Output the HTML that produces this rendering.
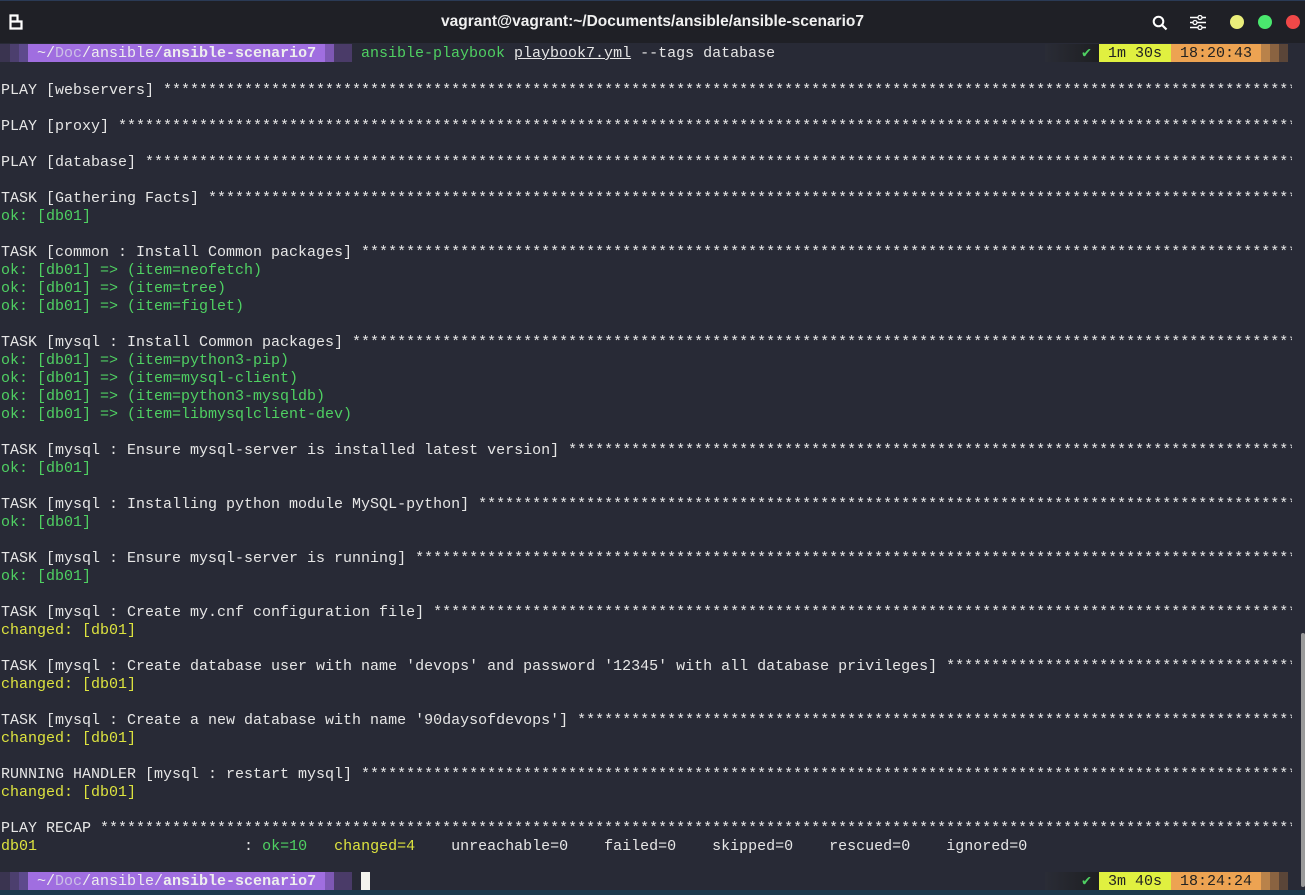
<!DOCTYPE html>
<html><head><meta charset="utf-8"><style>
body{margin:0;width:1305px;height:895px;background:#282a36;overflow:hidden;position:relative;font-family:"Liberation Mono",monospace;font-size:15px;color:#e6e6e6}
#tb{position:absolute;left:0;top:0;width:1305px;height:42px;background:#1f2026;border-top:1px solid #2a3a55}
#title{position:absolute;top:12px;left:0;width:1305px;text-align:center;font-family:"Liberation Sans",sans-serif;font-weight:bold;font-size:15.5px;color:#f0f0f0}
.r{position:absolute;left:1px;height:18px;line-height:18px;white-space:pre;width:1291px;overflow:hidden;margin-top:2px}
.g{color:#4fd062}.y{color:#dde33f}
.seg{position:absolute;height:18px;top:44px}
.pt{position:absolute;height:18px;line-height:18px;white-space:pre;margin-top:1px}
.dot{position:absolute;top:14px;width:14px;height:14px;border-radius:50%}
</style></head><body>
<div id="tb">
<svg style="position:absolute;left:9px;top:13px" width="14" height="16" viewBox="0 0 14 16"><path d="M1.5 1.5H8.5V7.5H12.5V14.5H1.5Z M1.5 7.5H8.5" fill="none" stroke="#fff" stroke-width="2.2"/></svg>
<div id="title">vagrant@vagrant:~/Documents/ansible/ansible-scenario7</div>
<svg style="position:absolute;left:1152px;top:14px" width="16" height="16" viewBox="0 0 16 16"><circle cx="6.5" cy="6.5" r="4.8" fill="none" stroke="#fff" stroke-width="2"/><path d="M10 10L14.5 14.5" stroke="#fff" stroke-width="2.2"/></svg>
<svg style="position:absolute;left:1190px;top:14px" width="16" height="15" viewBox="0 0 16 15"><path d="M0 2.5H16M0 7.5H16M0 12.5H16" stroke="#fff" stroke-width="1.5"/><circle cx="10" cy="2.5" r="2" fill="#1f2026" stroke="#fff" stroke-width="1.3"/><circle cx="5" cy="7.5" r="2" fill="#1f2026" stroke="#fff" stroke-width="1.3"/><circle cx="10" cy="12.5" r="2" fill="#1f2026" stroke="#fff" stroke-width="1.3"/></svg>
<div class="dot" style="left:1230px;background:#eaee7a"></div>
<div class="dot" style="left:1258px;background:#4ae86e"></div>
<div class="dot" style="left:1286px;background:#f04848"></div>
</div>

<!-- top prompt -->
<div class="seg" style="left:0;width:10px;background:#3a3450"></div>
<div class="seg" style="left:10px;width:9px;background:#4c3f6e"></div>
<div class="seg" style="left:19px;width:9px;background:#5d4a8c"></div>
<div class="seg" style="left:28px;width:297px;background:#a06ee0"></div>
<div class="seg" style="left:325px;width:9px;background:#7e58b4"></div>
<div class="seg" style="left:334px;width:18px;background:#4a3b68"></div>
<div class="pt" style="left:37px;top:44px;color:#eee">~/<span style="color:#ccc0e6">Doc</span>/ansible/<b>ansible-scenario7</b></div>
<div class="pt" style="left:361px;top:44px"><span class="g">ansible-playbook</span> <u>playbook7.yml</u> --tags database</div>
<div class="seg" style="left:1045px;width:54px;background:linear-gradient(90deg,#2a2c36,#1e1f22)"></div>
<div class="pt g" style="left:1082px;top:44px;font-weight:bold">✔</div>
<div class="seg" style="left:1099px;width:72px;background:#e0f040"></div>
<div class="pt" style="left:1108px;top:44px;color:#222">1m 30s</div>
<div class="seg" style="left:1171px;width:90px;background:#eda352"></div>
<div class="pt" style="left:1180px;top:44px;color:#222">18:20:43</div>
<div class="seg" style="left:1261px;width:9px;background:#b9824a"></div>
<div class="seg" style="left:1270px;width:9px;background:#8a6341"></div>
<div class="seg" style="left:1279px;width:9px;background:#5a4538"></div>

<div class="r" style="top:80px">PLAY [webservers] ****************************************************************************************************************************************</div>
<div class="r" style="top:116px">PLAY [proxy] *********************************************************************************************************************************************</div>
<div class="r" style="top:152px">PLAY [database] ******************************************************************************************************************************************</div>
<div class="r" style="top:188px">TASK [Gathering Facts] ***********************************************************************************************************************************</div>
<div class="r g" style="top:206px">ok: [db01]</div>
<div class="r" style="top:242px">TASK [common : Install Common packages] **********************************************************************************************************************</div>
<div class="r g" style="top:260px">ok: [db01] =&gt; (item=neofetch)</div>
<div class="r g" style="top:278px">ok: [db01] =&gt; (item=tree)</div>
<div class="r g" style="top:296px">ok: [db01] =&gt; (item=figlet)</div>
<div class="r" style="top:332px">TASK [mysql : Install Common packages] ***********************************************************************************************************************</div>
<div class="r g" style="top:350px">ok: [db01] =&gt; (item=python3-pip)</div>
<div class="r g" style="top:368px">ok: [db01] =&gt; (item=mysql-client)</div>
<div class="r g" style="top:386px">ok: [db01] =&gt; (item=python3-mysqldb)</div>
<div class="r g" style="top:404px">ok: [db01] =&gt; (item=libmysqlclient-dev)</div>
<div class="r" style="top:440px">TASK [mysql : Ensure mysql-server is installed latest version] ***********************************************************************************************</div>
<div class="r g" style="top:458px">ok: [db01]</div>
<div class="r" style="top:494px">TASK [mysql : Installing python module MySQL-python] *********************************************************************************************************</div>
<div class="r g" style="top:512px">ok: [db01]</div>
<div class="r" style="top:548px">TASK [mysql : Ensure mysql-server is running] ****************************************************************************************************************</div>
<div class="r g" style="top:566px">ok: [db01]</div>
<div class="r" style="top:602px">TASK [mysql : Create my.cnf configuration file] **************************************************************************************************************</div>
<div class="r y" style="top:620px">changed: [db01]</div>
<div class="r" style="top:656px">TASK [mysql : Create database user with name 'devops' and password '12345' with all database privileges] *********************************************************</div>
<div class="r y" style="top:674px">changed: [db01]</div>
<div class="r" style="top:710px">TASK [mysql : Create a new database with name '90daysofdevops'] **********************************************************************************************</div>
<div class="r y" style="top:728px">changed: [db01]</div>
<div class="r" style="top:764px">RUNNING HANDLER [mysql : restart mysql] **********************************************************************************************************************</div>
<div class="r y" style="top:782px">changed: [db01]</div>
<div class="r" style="top:818px">PLAY RECAP ***********************************************************************************************************************************************</div>
<div class="r" style="top:836px"><span class="y">db01</span>                       : <span class="g">ok=10</span>   <span class="y">changed=4</span>    unreachable=0    failed=0    skipped=0    rescued=0    ignored=0</div>

<!-- bottom prompt -->
<div class="seg" style="top:872px;left:0;width:10px;background:#3a3450"></div>
<div class="seg" style="top:872px;left:10px;width:9px;background:#4c3f6e"></div>
<div class="seg" style="top:872px;left:19px;width:9px;background:#5d4a8c"></div>
<div class="seg" style="top:872px;left:28px;width:297px;background:#a06ee0"></div>
<div class="seg" style="top:872px;left:325px;width:9px;background:#7e58b4"></div>
<div class="seg" style="top:872px;left:334px;width:18px;background:#4a3b68"></div>
<div class="pt" style="left:37px;top:872px;color:#eee">~/<span style="color:#ccc0e6">Doc</span>/ansible/<b>ansible-scenario7</b></div>
<div class="seg" style="top:872px;left:361px;width:9px;background:#f4f4ee"></div>
<div class="seg" style="top:872px;left:1045px;width:54px;background:linear-gradient(90deg,#2a2c36,#1e1f22)"></div>
<div class="pt g" style="left:1082px;top:872px;font-weight:bold">✔</div>
<div class="seg" style="top:872px;left:1099px;width:72px;background:#e0f040"></div>
<div class="pt" style="left:1108px;top:872px;color:#222">3m 40s</div>
<div class="seg" style="top:872px;left:1171px;width:90px;background:#eda352"></div>
<div class="pt" style="left:1180px;top:872px;color:#222">18:24:24</div>
<div class="seg" style="top:872px;left:1261px;width:9px;background:#b9824a"></div>
<div class="seg" style="top:872px;left:1270px;width:9px;background:#8a6341"></div>
<div class="seg" style="top:872px;left:1279px;width:9px;background:#5a4538"></div>
<div style="position:absolute;left:1301px;top:633px;width:4px;height:254px;background:#9a9a9a;border-radius:2px"></div>
<div style="position:absolute;left:0;top:890px;width:1305px;height:5px;background:#1d3a4c"></div>
</body></html>
